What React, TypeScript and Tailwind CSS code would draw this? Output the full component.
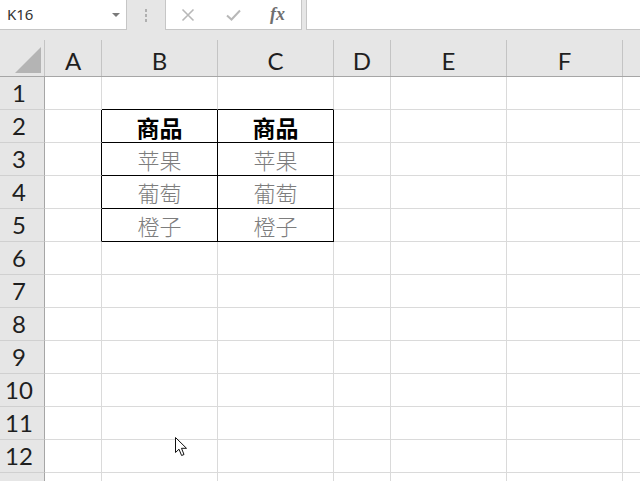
const COLS = [
  { label: 'A', w: 'w-[57px]' },
  { label: 'B', w: 'w-[116px]' },
  { label: 'C', w: 'w-[116px]' },
  { label: 'D', w: 'w-[57px]' },
  { label: 'E', w: 'w-[116px]' },
  { label: 'F', w: 'w-[116px]' },
  { label: 'G', w: 'w-[60px]' },
]

// rows 2..5 hold the little bordered table in B:C
const TABLE: Record<number, string[]> = {
  2: ['商品', '商品'],
  3: ['苹果', '苹果'],
  4: ['葡萄', '葡萄'],
  5: ['橙子', '橙子'],
}

const ROWS = Array.from({ length: 13 }, (_, i) => i + 1)

const headFont = { fontFamily: 'Lato, "Noto Sans", sans-serif' }
const cjkFont = { fontFamily: '"Noto Sans CJK SC", "Noto Sans", sans-serif' }

function Cell({ row, col }: { row: number; col: number }) {
  const inTable = row >= 2 && row <= 5
  const blackBottom = (col === 1 || col === 2) && row >= 1 && row <= 5
  const blackRight = inTable && col <= 2
  const text = inTable && (col === 1 || col === 2) ? TABLE[row][col - 1] : ''
  const header = row === 2

  return (
    <div
      className={`flex h-[33px] shrink-0 items-center justify-center border-r border-b ${COLS[col].w} ${
        blackBottom ? 'border-b-black' : 'border-b-[#dadada]'
      } ${blackRight ? 'border-r-black' : 'border-r-[#dadada]'}`}
    >
      {text && (
        <span
          style={cjkFont}
          className={
            header
              ? 'pt-[2px] text-[23px] font-bold leading-none text-black'
              : 'text-[22px] leading-none font-light text-[#7d7d7d]'
          }
        >
          {text}
        </span>
      )}
    </div>
  )
}

function FormulaBar() {
  return (
    <div className="flex h-[30px] bg-[#e6e6e6]">
      <div className="relative flex w-[127px] shrink-0 items-center border-r border-b border-[#c6c6c6] bg-white pl-[7px]">
        <span style={{ fontFamily: '"Noto Sans", sans-serif' }} className="text-[15px] text-[#333]">
          K16
        </span>
        <span className="absolute top-[13px] left-[112px] h-0 w-0 border-x-[4px] border-t-[4px] border-x-transparent border-t-[#7a7a7a]" />
      </div>
      <div className="flex w-[38px] shrink-0 flex-col items-center justify-center gap-[2px]">
        <span className="h-[3px] w-[2px] bg-[#b0b0b0]" />
        <span className="h-[3px] w-[2px] bg-[#b0b0b0]" />
        <span className="h-[3px] w-[2px] bg-[#b0b0b0]" />
      </div>
      <div className="flex w-[137px] shrink-0 items-center border-x border-b border-[#c6c6c6] bg-white">
        <svg className="ml-[15px]" width="14" height="14" viewBox="0 0 14 14">
          <path d="M1.5 1.5 L12.5 12.5 M12.5 1.5 L1.5 12.5" stroke="#b8b8b8" strokeWidth="1.6" fill="none" />
        </svg>
        <svg className="ml-[31px]" width="15" height="12" viewBox="0 0 15 12">
          <path d="M1 6.5 L5.5 10.5 L14 1.5" stroke="#b8b8b8" strokeWidth="2" fill="none" />
        </svg>
        <span
          style={{ fontFamily: '"Liberation Serif", serif' }}
          className="ml-[29px] text-[18px] font-bold text-[#6f6f6f] italic"
        >
          fx
        </span>
      </div>
      <div className="w-[4px] shrink-0" />
      <div className="flex-1 border-l border-b border-[#c6c6c6] bg-white" />
    </div>
  )
}

export default function App() {
  return (
    <div className="relative h-[481px] w-[640px] overflow-hidden bg-white">
      <FormulaBar />
      <div className="h-[10px] bg-[#e6e6e6]" />

      {/* column headers */}
      <div className="flex h-[37px] border-b border-[#a6a6a6] bg-[#e6e6e6]">
        <div className="relative w-[45px] shrink-0 border-r border-[#c4c4c4]">
          <svg className="absolute top-[7px] left-[15px]" width="27" height="27" viewBox="0 0 27 27">
            <polygon points="26,0 26,26 0,26" fill="#b4b4b4" />
          </svg>
        </div>
        {COLS.map((c) => (
          <div
            key={c.label}
            style={headFont}
            className={`flex shrink-0 items-center justify-center border-r border-[#c4c4c4] pt-[6px] text-[24px] leading-none text-[#1f1f1f] ${c.w}`}
          >
            {c.label !== 'G' && c.label}
          </div>
        ))}
      </div>

      {ROWS.map((r) => (
        <div key={r} className="flex">
          <div
            style={headFont}
            className="flex h-[33px] w-[45px] shrink-0 items-center justify-center border-r border-b border-r-[#a6a6a6] border-b-[#d0d0d0] bg-[#e6e6e6] pr-[6px] text-[24px] leading-none text-[#1f1f1f]"
          >
            {r < 13 && r}
          </div>
          {COLS.map((c, i) => (
            <Cell key={c.label} row={r} col={i} />
          ))}
        </div>
      ))}

      {/* mouse pointer */}
      <svg className="absolute top-[437px] left-[175px]" width="13" height="20" viewBox="0 0 13 20">
        <path
          d="M0.5 0.5 L0.5 15.5 L4 12.2 L6.6 18.5 L9 17.5 L6.5 11.3 L11.5 11.3 Z"
          fill="#fff"
          stroke="#111"
          strokeWidth="1"
          strokeLinejoin="round"
        />
      </svg>
    </div>
  )
}
